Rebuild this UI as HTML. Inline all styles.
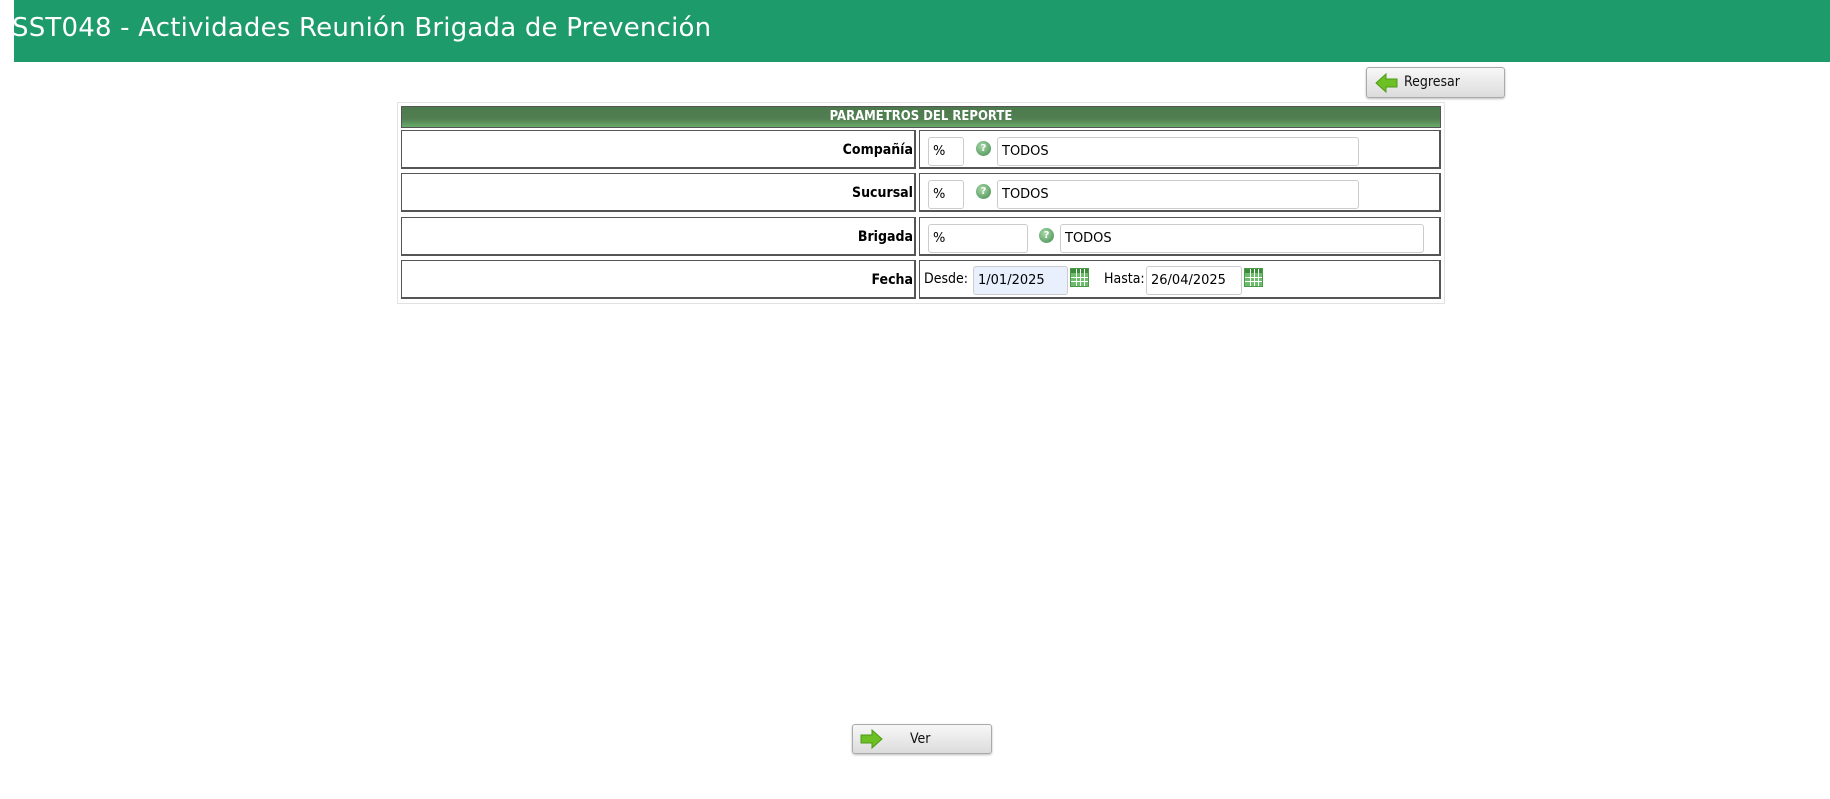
<!DOCTYPE html>
<html><head><meta charset="utf-8"><style>
body{margin:0;width:1830px;height:799px;background:#fff;position:relative;overflow:hidden;font-family:"DejaVu Sans","Liberation Sans",sans-serif;}
.hdr{position:absolute;left:14px;top:0;width:1816px;height:62px;background:#1e9b6b;}
.title{position:absolute;left:12px;top:13px;color:#fff;font-size:26px;font-family:"DejaVu Sans",sans-serif;letter-spacing:0.2px;white-space:nowrap}
.btn{position:absolute;border:1px solid #aaa;border-radius:3px;background:linear-gradient(#f7f7f7,#dcdcdc);box-shadow:0 1px 2px #bbb;font-size:14px;color:#111;font-family:"DejaVu Sans Condensed","DejaVu Sans",sans-serif}
.tbl{position:absolute;left:397px;top:102px;width:1046px;height:200px;border:1px solid #e2e2e2}
.th{position:absolute;left:3px;top:3px;width:1038px;height:20px;border:1px solid #555;background:linear-gradient(#4c7a4c 0%,#527f52 60%,#6aab6a 100%);color:#fff;font-weight:bold;font-size:13px;text-align:center;line-height:20px;font-family:"DejaVu Sans Condensed","DejaVu Sans",sans-serif}
.row{position:absolute;left:3px;height:40px}
.lab{position:absolute;left:0;top:0;width:515px;height:39px;border:1px solid #555;font-weight:bold;font-size:14px;text-align:right;line-height:39px;box-sizing:border-box;padding-right:1px;border-width:1px 2px 2px 1px;font-family:"DejaVu Sans Condensed","DejaVu Sans",sans-serif}
.val{position:absolute;left:518px;top:0;width:522px;height:39px;border:1px solid #555;border-width:1px 2px 2px 1px;box-sizing:border-box}
.in{position:absolute;height:29px;box-sizing:border-box;border:1px solid #ccc;border-radius:3px;background:#fff;font-size:13px;line-height:28px;padding-left:4px}
.q{position:absolute;width:15px;height:15px;border-radius:50%;background:radial-gradient(circle at 40% 35%,#a8d8a8,#3f8a4c);color:#fff;font-size:10px;font-weight:bold;text-align:center;line-height:15px}
.cal{position:absolute;width:19px;height:19px;background:#6dbb6d;border:1px solid #4a9a4a;box-sizing:border-box;background-image:linear-gradient(90deg,transparent 5px,#fff 5px,#fff 6px,transparent 6px,transparent 9px,#fff 9px,#fff 10px,transparent 10px,transparent 13px,#fff 13px,#fff 14px,transparent 14px),linear-gradient(#3d8a3d 4px,transparent 4px,transparent 8px,#fff 8px,#fff 9px,transparent 9px,transparent 12px,#fff 12px,#fff 13px,transparent 13px)}
.sm{position:absolute;font-size:14px;top:10px;font-family:"DejaVu Sans Condensed","DejaVu Sans",sans-serif}
</style></head><body>
<div class="hdr"></div>
<div class="title">SST048 - Actividades Reunión Brigada de Prevención</div>
<div class="btn" style="left:1366px;top:67px;width:137px;height:29px">
<svg style="position:absolute;left:8px;top:5px" width="24" height="20" viewBox="0 0 24 20"><path d="M1 10 L11 1 L11 6 L22 6 L22 14 L11 14 L11 19 Z" fill="#6cc024" stroke="#4d9a14" stroke-width="1"/></svg>
<span style="position:absolute;left:37px;top:6px">Regresar</span></div>
<div class="tbl">
<div class="th">PARAMETROS DEL REPORTE</div>
<div class="row" style="top:27px"><div class="lab">Compañía</div><div class="val">
<div class="in" style="left:8px;top:6px;width:36px">%</div><div class="q" style="left:56px;top:10px">?</div><div class="in" style="left:77px;top:6px;width:362px">TODOS</div></div></div>
<div class="row" style="top:70px"><div class="lab">Sucursal</div><div class="val">
<div class="in" style="left:8px;top:6px;width:36px">%</div><div class="q" style="left:56px;top:10px">?</div><div class="in" style="left:77px;top:6px;width:362px">TODOS</div></div></div>
<div class="row" style="top:114px"><div class="lab">Brigada</div><div class="val">
<div class="in" style="left:8px;top:6px;width:100px">%</div><div class="q" style="left:119px;top:10px">?</div><div class="in" style="left:140px;top:6px;width:364px">TODOS</div></div></div>
<div class="row" style="top:157px"><div class="lab">Fecha</div><div class="val">
<span class="sm" style="left:4px">Desde:</span><div class="in" style="left:53px;top:5px;width:95px;background:#e8f0fe">1/01/2025</div><div class="cal" style="left:150px;top:7px"></div>
<span class="sm" style="left:184px">Hasta:</span><div class="in" style="left:226px;top:5px;width:96px">26/04/2025</div><div class="cal" style="left:324px;top:7px"></div></div></div>
</div>
<div class="btn" style="left:852px;top:724px;width:138px;height:28px">
<svg style="position:absolute;left:6px;top:4px" width="24" height="20" viewBox="0 0 24 20"><path d="M23 10 L13 1 L13 6 L2 6 L2 14 L13 14 L13 19 Z" fill="#6cc024" stroke="#4d9a14" stroke-width="1"/></svg>
<span style="position:absolute;left:57px;top:6px">Ver</span></div>
</body></html>
